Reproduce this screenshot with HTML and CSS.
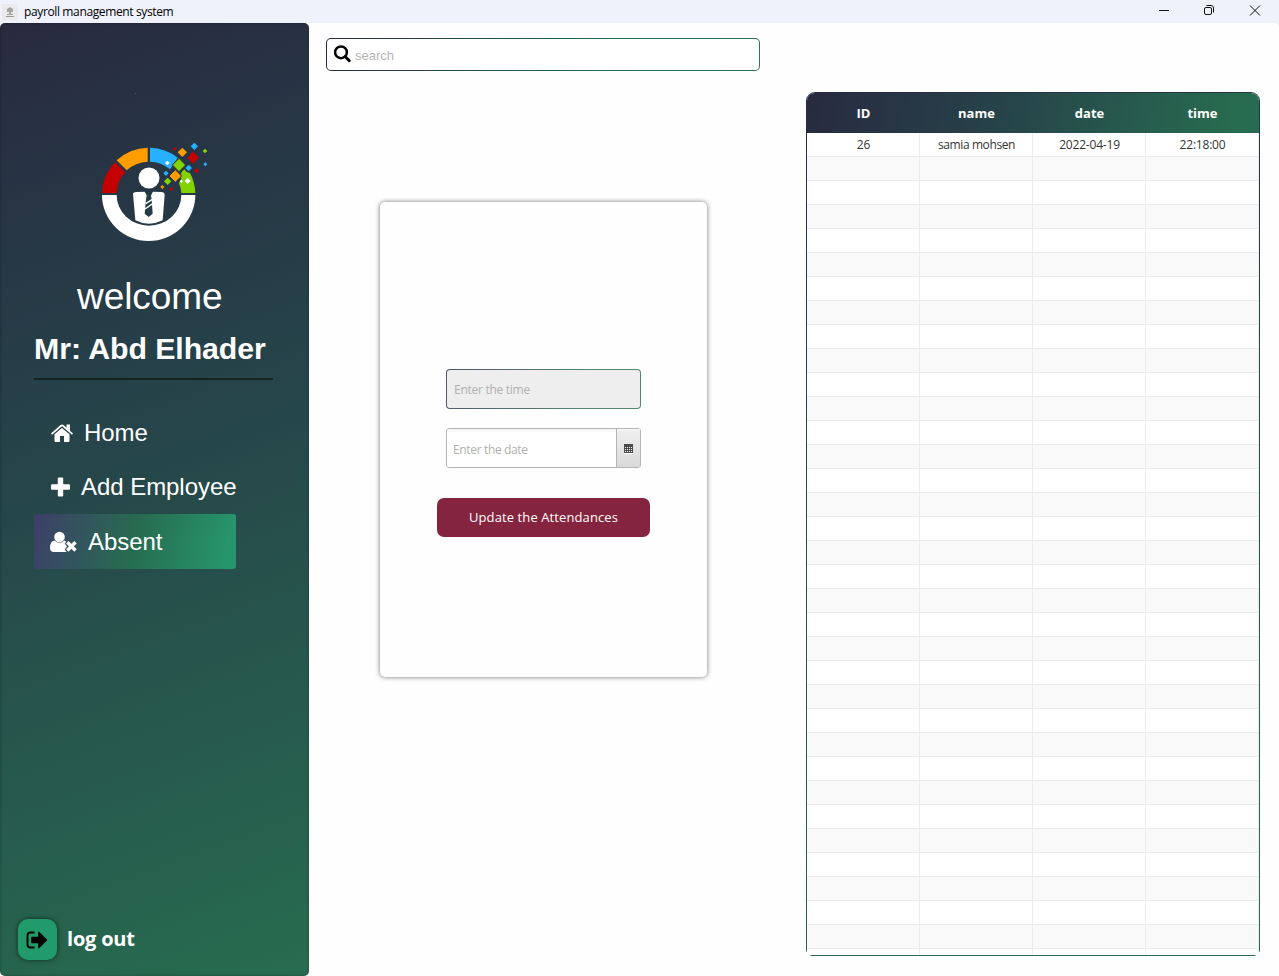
FILE: index.html
```html
<!DOCTYPE html>
<html lang="en">
<head>
<meta charset="utf-8">
<title>payroll management system</title>
<link rel="stylesheet" href="styles.css">
</head>
<body>
<header class="titlebar">
  <svg class="app-icon" width="16" height="16" viewBox="0 0 16 16"><rect width="16" height="16" fill="#eaeaec"/><path d="M8 3l3 2v3H9v2h2v1H5v-1h2V8H5V5z" fill="#a5a5a5"/><path d="M4 12h8v1H4z" fill="#999"/></svg>
  <span class="app-title">payroll management system</span>
  <svg class="win-controls" width="149" height="23" viewBox="0 0 149 23" fill="none" stroke="#111"><path d="M29 10.5h10"/><rect x="74.500" y="7.500" width="7" height="7" rx="1.500"/><path d="M76.500 5.500h4.500a2.500 2.500 0 0 1 2.500 2.500v4.500"/><path d="M120 5.500l10 10M130 5.500l-10 10"/></svg>
</header>
<div class="window">
  <aside class="sidebar">
    <svg class="logo" width="130" height="170" viewBox="0 0 390 510">
      <circle cx="136.500" cy="40.500" r="1.500" fill="#5a6470"/>
      <path d="M36 345H80A97 92 0 0 0 274 345H316A140 138 0 0 1 36 345Z" fill="#fff"/>
      <path d="M36 339A141 139 0 0 1 75 247L106 276A98 98 0 0 0 80 339Z" fill="#c40000"/>
      <path d="M80 241A140 140 0 0 1 173 203V245A98 98 0 0 0 110 271Z" fill="#ff9c00"/>
      <path d="M180 203A140 140 0 0 1 263 233L240 268A98 98 0 0 0 180 245Z" fill="#27b0ff"/>
      <path d="M274 339A98 98 0 0 0 267 309L273 298L274 277L283 268L290 276L300 279A140 140 0 0 1 316 339Z" fill="#82d300"/>
      <g stroke="#27343f" stroke-width="3">
        <path d="M267 235l20 20-20 20-20-20z" fill="#82d300"/>
        <path d="M256 269l19 19-19 19-19-19z" fill="#ff9c00"/>
      </g>
      <path d="M277 203l14 14-14 14-14-14z" fill="#ff9c00"/>
      <path d="M309 215l18 18-18 18-18-18z" fill="#c40000"/>
      <path d="M313 188l11 11-11 11-11-11zM296 254l10 10-10 10-10-10zM228 272l8 8-8 8-8-8zM346 247l6 6-6 6-6-6z" fill="#27b0ff"/>
      <path d="M345 206l7 7-7 7-7-7zM233 293l11 11-11 11-11-11z" fill="#82d300"/>
      <path d="M320 264l8 8-8 8-8-8zM255 200l6 6-6 6-6-6zM244 322l6 6-6 6-6-6z" fill="#c40000"/>
      <path d="M217 315l6 6-6 6-6-6z" fill="#ff9c00"/>
      <path d="M232 242l7 7-7 7-7-7zM293 294l9 9-9 9-9-9zM274 299l5 5-5 5-5-5z" fill="#fff"/>
      <circle cx="177" cy="294" r="31.500" fill="#fff"/>
      <path d="M129 342Q129 337 139 336L164 335L171 345H182L189 335L215 336Q224 337 224 345L218 421Q177 442 136 421Z" fill="#fff"/>
      <path d="M165 334H188L183 347L185 357L188 401L176 411L164 401L168 358L170 347Z" fill="#273d46"/>
      <path d="M167 371L187 358M165 387L188 371" stroke="#fff" stroke-width="4"/>
    </svg>
    <div class="welcome">welcome</div>
    <div class="user">Mr: Abd Elhader</div>
    <div class="rule"></div>
    <nav class="menu">
      <a class="item home"><svg width="22" height="20" viewBox="0 0 22 20" fill="#fff"><path d="M0 10.500L9.500 2Q11 .8 12.500 2L15.500 4.700V1.500H19V7.800L22 10.500L21 11.700L11 3.200L1 11.700Z"/><path d="M3.500 11.300L11 5L18.500 11.300V18Q18.500 19 17.500 19H13V13H9V19H4.500Q3.500 19 3.500 18Z"/></svg><span>Home</span></a>
      <a class="item add"><svg width="19" height="20" viewBox="0 0 19 20" fill="#fff"><path d="M7.800.500h3.400q1 0 1 1v5.800H18q1 0 1 1v3.400q0 1-1 1h-5.800v5.800q0 1-1 1H7.800q-1 0-1-1v-5.800H1q-1 0-1-1V8.300q0-1 1-1h5.800V1.500q0-1 1-1z"/></svg><span>Add Employee</span></a>
      <a class="item absent"><svg width="28" height="22" viewBox="0 0 28 22"><circle cx="9.500" cy="6" r="5.300" fill="#fff"/><path d="M4.500 9.500Q9.500 14 14.500 9.500Q15.600 9.900 16.200 10.700L14.700 12.500L17 15.600L14.700 18.500L16.600 21H3Q0 20.500 0 17Q0 10 4.500 9.500Z" fill="#fff"/><path d="M17.300 11.300l8.200 8.200M25.500 11.300l-8.200 8.200" stroke="#fff" stroke-width="3.500"/></svg><span>Absent</span></a>
    </nav>
    <div class="logout">
      <div class="logout-button"><svg width="22" height="18" viewBox="0 0 22 18"><path d="M8.500 1.500H4.500Q1.500 1.500 1.500 4.500V13.500Q1.500 16.500 4.500 16.500H8.500" fill="none" stroke="#000" stroke-width="1.900"/><path d="M6 5.800H12.200V1L13 .6L21.300 9L13 17.400L12.200 17V12.200H6Q5.200 12.200 5.200 11.400V6.600Q5.200 5.800 6 5.800Z"/></svg></div>
      <span>log out</span>
    </div>
  </aside>
  <main class="form-area">
    <div class="search"><svg width="19" height="19" viewBox="0 0 19 19" fill="none" stroke="#000"><circle cx="7" cy="7.300" r="5.900" stroke-width="2.500"/><path d="M11.300 11.700l4 4" stroke-width="3" stroke-linecap="round"/></svg><span>search</span></div>
    <section class="card">
      <div class="time-field"><span>Enter the time</span></div>
      <div class="date-field"><div class="date-input"><span>Enter the date</span></div>
        <div class="date-button"><svg width="9" height="10" viewBox="0 0 9 10"><path d="M0 0h9v9H0z" fill="#4b4b4b"/><path d="M1 3.500h7M1 5.500h7M1 7.500h7" stroke="#eee" stroke-dasharray="1 1"/><path d="M0 9.500h9" stroke="#fff"/></svg></div>
      </div>
      <button class="update"><span>Update the Attendances</span></button>
    </section>
  </main>
  <section class="table">
    <div class="thead"><span>ID</span><span>name</span><span>date</span><span>time</span></div>
    <div class="tbody">
      <div class="row"><span>26</span><span class="name">samia mohsen</span><span>2022-04-19</span><span>22:18:00</span></div>
    </div>
  </section>
</div>
</body>
</html>
```
FILE: styles.css
```css
* { box-sizing: border-box; }
body { margin: 0; width: 1279px; height: 976px; overflow: hidden; background: #eff2fa; font-family: "Open Sans", sans-serif; display: flex; flex-direction: column; }
svg { display: block; flex: none; }
span { white-space: nowrap; }
.titlebar { height: 23px; flex: none; display: flex; align-items: center; padding-left: 2px; background: #eff2fb; }
.app-title { margin-left: 6px; font-size: 12px; letter-spacing: -0.37px; color: #000; line-height: 22px; }
.win-controls { margin-left: auto; }
.window { flex: 1; min-height: 0; display: flex; background: #fefefe; border-radius: 5px 5px 0 0; }
.sidebar { width: 309px; flex: none; border-radius: 5px; display: flex; flex-direction: column; background: linear-gradient(160deg, #282a40 0%, #264149 38%, #276c50 100%); box-shadow: inset 0 0 3px rgba(0,0,0,.3); color: #fff; font-family: "Liberation Sans", sans-serif; }
.logo { margin: 57px 0 0 90px; }
.welcome { margin: 26px 0 0 77px; font-size: 37px; line-height: 42px; letter-spacing: -0.05px; }
.user { margin: 13px 0 0 34px; font-size: 30.3px; font-weight: bold; line-height: 36px; white-space: nowrap; letter-spacing: -0.07px; }
.rule { width: 239px; height: 2px; margin: 11px 0 0 34px; background: #142424; }
.menu { margin: 25px 0 0 34px; width: 202px; font-size: 24px; line-height: 28px; letter-spacing: -0.05px; }
.item { display: flex; align-items: center; height: 55px; border-radius: 3px; }
.home { padding-left: 17px; }
.home span { margin-left: 11px; }
.add { padding-left: 17px; height: 54px; }
.add span { margin-left: 11px; }
.absent { height: 55px; padding: 1px 0 0 16px; background: linear-gradient(105deg, #3d4068 2%, #276c50 50%, #27956c 94%); }
.absent span { margin-left: 10px; }
.logout { margin: auto 0 16px 18px; display: flex; align-items: center; font: bold 20px/28px "Open Sans", sans-serif; }
.logout span { margin-left: 10px; letter-spacing: -0.2px; padding-bottom: 2px; }
.logout-button { width: 39px; height: 41px; border-radius: 10px; background: #219b6b; display: flex; align-items: center; justify-content: center; padding: 0 2px 0 0; box-shadow: 0 0 5px rgba(0,0,0,.6); }
.form-area { width: 497px; flex: none; padding: 15px 0 0 17px; }
.search { width: 434px; height: 33px; border: 1px solid transparent; border-radius: 5px; background: linear-gradient(#fff,#fff) padding-box, linear-gradient(105deg, #282a40, #276c50 65%, #2b7258) border-box; display: flex; align-items: center; padding-left: 7px; }
.search span { color: #b4b4b4; font: 13px/18px "Liberation Sans", sans-serif; margin-left: 2px; padding-top: 2px; }
.card { width: 327px; height: 475px; margin: 131px 0 0 54px; border-radius: 5px; background: #fefefe; box-shadow: 0 0 5px rgba(0,0,0,.55); padding-top: 167px; }
.time-field, .date-field { width: 195px; height: 40px; margin-left: 66px; border-radius: 4px; font-size: 12px; color: #b0b0b0; display: flex; align-items: center; }
.time-field { border: 1px solid transparent; padding-left: 7px; background: linear-gradient(#eee,#eee) padding-box, linear-gradient(105deg,#53566c,#54866f 70%) border-box; }
.time-field span { letter-spacing: -0.27px; }
.date-field span { letter-spacing: -0.35px; padding-top: 2px; }
.date-field { margin-top: 19px; border: 1px solid #b4b4b4; border-radius: 3px; }
.date-input { flex: 1; height: 38px; padding-left: 6px; display: flex; align-items: center; background: linear-gradient(#f2f2f2, #fff 4px); border-radius: 2px; }
.date-button { width: 24px; height: 38px; border-left: 1px solid #b4b4b4; background: linear-gradient(#f0f0f0,#d9d9d9); display: flex; align-items: center; justify-content: center; padding-top: 2px; box-shadow: inset 0 1px 0 #f8f8f8; }
.update { display: block; width: 213px; height: 39px; margin: 30px 0 0 57px; border: 0; border-radius: 7px; background: #85243e; color: #fff; font: 13px/18px "Open Sans", sans-serif; padding: 0 0 2px; }
.update span { letter-spacing: 0.1px; }
.table { width: 454px; height: 864px; margin-top: 69px; flex: none; border: 1px solid transparent; border-radius: 9px 9px 0 0; overflow: hidden; background: linear-gradient(#fefefe,#fefefe) padding-box, radial-gradient(circle at 0 100%, #fefefe 4px, transparent 5px) border-box, radial-gradient(circle at 100% 100%, #fefefe 4px, transparent 5px) border-box, linear-gradient(162deg,#282a40,#276c50 90%) border-box; display: flex; flex-direction: column; }
.thead { height: 40px; flex: none; display: grid; grid-template-columns: repeat(4, 113px); align-items: center; text-align: center; background: linear-gradient(100deg,#282a40,#264149 40%,#276c50 95%); color: #fff; font-weight: bold; font-size: 13px; }
.tbody { flex: 1; background: repeating-linear-gradient(90deg, transparent 0 112px, #ececec 112px 113px), repeating-linear-gradient(#fff 0 23px, #ececec 23px 24px, #f9f9f9 24px 47px, #ececec 47px 48px); }
.row { height: 24px; display: grid; grid-template-columns: repeat(4, 113px); align-items: center; text-align: center; font-size: 12px; color: #333; line-height: 22px; letter-spacing: -0.2px; }
.name { letter-spacing: -0.4px; }
```
